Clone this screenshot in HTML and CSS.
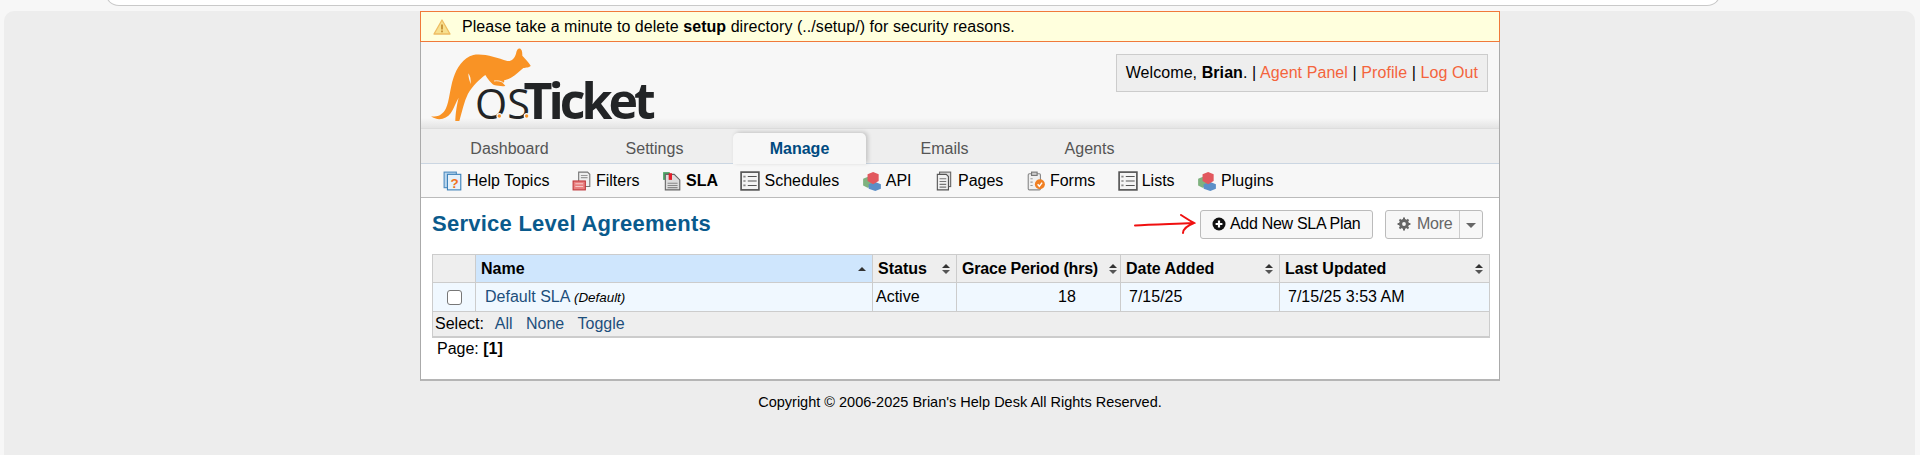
FILE: index.html
```html
<!DOCTYPE html>
<html lang="en">
<head>
    <meta charset="UTF-8">
    <title>osTicket :: SLA Plans</title>
    <link rel="stylesheet" href="styles.css">
</head>
<body>
    <div class="browser-top"><div class="url-bar"></div></div>
    <div class="viewport">
        <div class="container">
            <div class="notice">
                <svg class="notice-icon" width="18" height="16" viewBox="0 0 18 16">
                    <path d="M9 1 L17 15 H1 Z" fill="#f7e08f" stroke="#eebc63" stroke-width="1.3" stroke-linejoin="round"/>
                    <rect x="8.1" y="5.5" width="1.8" height="5" fill="#c58f35"/>
                    <rect x="8.1" y="11.5" width="1.8" height="1.8" fill="#c58f35"/>
                </svg>
                <span>Please take a minute to delete <b>setup</b> directory (../setup/) for security reasons.</span>
            </div>

            <div class="header">
                <svg class="logo" width="240" height="100" viewBox="0 0 720 300">
                    <g transform="translate(3 15)">
                        <path fill="#f99325" d="M3 213 C18 218 38 212 48 190 C58 168 60 130 70 100 C80 68 100 38 130 30 C160 24 200 38 232 48 C244 50 254 40 258 26 C260 14 266 8 272 12 C277 16 277 26 277 32 C286 42 296 52 302 62 C298 68 288 67 280 69 C268 78 258 90 243 98 C236 102 228 104 222 106 C224 110 222 113 218 114 L226 122 C220 126 205 122 192 120 C182 114 172 100 166 90 C150 102 128 122 114 146 C102 170 96 200 88 228 L76 228 C76 210 80 180 86 158 C78 170 72 190 62 205 C48 225 20 228 3 213 Z"/>
                        <path fill="#f7f7f7" d="M115 85 C121 93 123 103 122 117 C118 107 115 96 115 85 Z"/>
                        <path fill="none" stroke="#f7f7f7" stroke-width="2.5" d="M192 108 C202 106 212 108 220 113"/>
                    </g>
                    <text x="138" y="238"><tspan class="logo-os">OS</tspan><tspan class="logo-ticket" dx="-19">Ticket</tspan></text>
                    <circle class="logo-dot" cx="211" cy="228" r="7"/>
                    <circle class="logo-dot" cx="293" cy="228" r="7"/>
                </svg>
                <div class="user-info">Welcome, <b>Brian</b>. | <a href="#">Agent Panel</a> | <a href="#">Profile</a> | <a href="#">Log Out</a></div>
            </div>

            <ul class="nav">
                <li>Dashboard</li>
                <li>Settings</li>
                <li class="active">Manage</li>
                <li>Emails</li>
                <li>Agents</li>
            </ul>

            <ul class="subnav">
                <li>
                    <svg viewBox="0 0 18 18">
                        <rect x="1" y="1" width="11" height="14" fill="#bcd7ee" stroke="#4d8cc0"/>
                        <rect x="4" y="3" width="12" height="14" fill="#e6f1fa" stroke="#3d82ba"/>
                        <text x="6.8" y="15" class="help-mark">?</text>
                    </svg>
                    Help Topics
                </li>
                <li>
                    <svg viewBox="0 0 18 18">
                        <path d="M6 1 H14 L16 3 V14 H6 Z" fill="#eee" stroke="#777"/>
                        <path d="M8 4 H14 M8 6 H14" stroke="#999"/>
                        <rect x="1" y="9" width="11" height="8" fill="#e98080" stroke="#c0383c"/>
                        <path d="M3 11.5 H10 M3 14 H10" stroke="#f7c7c7"/>
                    </svg>
                    Filters
                </li>
                <li class="current">
                    <svg viewBox="0 0 18 18">
                        <rect x="1" y="1" width="6" height="7" fill="#4aa564"/>
                        <path d="M3 3 H11 L16 8 V17 H3 Z" fill="#ddd" stroke="#666"/>
                        <rect x="6" y="2" width="3" height="6" fill="#e3202c"/>
                        <path d="M5 11 H14 M5 13 H14 M5 15 H14" stroke="#888"/>
                    </svg>
                    SLA
                </li>
                <li>
                    <svg viewBox="0 0 18 18"><use href="#list-icon"/></svg>
                    Schedules
                </li>
                <li>
                    <svg viewBox="0 0 18 18"><use href="#cubes-icon"/></svg>
                    API
                </li>
                <li>
                    <svg viewBox="0 0 18 18">
                        <rect x="5" y="1" width="10" height="13" fill="#ddd" stroke="#666"/>
                        <path d="M3 3 H11 L13 5 V17 H3 Z" fill="#f1f1f1" stroke="#555"/>
                        <path d="M5 7 H11 M5 9.5 H11 M5 12 H11 M5 14.5 H11" stroke="#777"/>
                    </svg>
                    Pages
                </li>
                <li>
                    <svg viewBox="0 0 18 18">
                        <rect x="2" y="2.5" width="11" height="14.5" rx="1" fill="#f0f0f0" stroke="#888"/>
                        <rect x="5" y="1" width="5" height="3" fill="#ccc" stroke="#777"/>
                        <path d="M4 7 H6 M4 10 H6 M4 13 H6" stroke="#999"/>
                        <circle cx="12.5" cy="12" r="4.5" fill="#f07f22"/>
                        <path d="M10.5 12 L12 13.8 L14.5 10.5" stroke="#fff" stroke-width="1.3" fill="none"/>
                    </svg>
                    Forms
                </li>
                <li>
                    <svg viewBox="0 0 18 18"><use href="#list-icon"/></svg>
                    Lists
                </li>
                <li>
                    <svg viewBox="0 0 18 18"><use href="#cubes-icon"/></svg>
                    Plugins
                </li>
            </ul>

            <div class="content">
                <div class="title-row">
                    <h2>Service Level Agreements</h2>
                    <div class="actions">
                        <svg class="red-arrow" width="62" height="20" viewBox="0 0 62 20">
                            <path d="M1 11.5 C16 10.5 36 10 59 9 M47 1 C52 4 56 7 60 9 C55 11 49 14 49 19" fill="none" stroke="#f01010" stroke-width="2" stroke-linecap="round"/>
                        </svg>
                        <button class="btn add-btn">
                            <svg width="14" height="14" viewBox="0 0 14 14">
                                <circle cx="7" cy="7" r="6.5" fill="#111"/>
                                <path d="M7 3.6 V10.4 M3.6 7 H10.4" stroke="#fff" stroke-width="2.2"/>
                            </svg>
                            Add New SLA Plan
                        </button>
                        <div class="btn more-btn">
                            <span class="more-label">
                                <svg width="14" height="14" viewBox="0 0 14 14">
                                    <circle cx="7" cy="7" r="3.6" fill="none" stroke="#666" stroke-width="2.8"/>
                                    <path d="M7 .6 V13.4 M.6 7 H13.4 M2.5 2.5 L11.5 11.5 M11.5 2.5 L2.5 11.5" stroke="#666" stroke-width="2"/>
                                    <circle cx="7" cy="7" r="1.9" fill="#f7f7f7"/>
                                </svg>
                                More
                            </span>
                            <span class="more-caret"></span>
                        </div>
                    </div>
                </div>

                <table class="list">
                    <thead>
                        <tr>
                            <th class="col-check"></th>
                            <th class="col-name sorted"><span class="th-inner">Name<i class="sort-up"></i></span></th>
                            <th class="col-status"><span class="th-inner">Status<i class="sort-both"></i></span></th>
                            <th class="col-grace"><span class="th-inner">Grace Period (hrs)<i class="sort-both"></i></span></th>
                            <th class="col-date"><span class="th-inner">Date Added<i class="sort-both"></i></span></th>
                            <th class="col-updated"><span class="th-inner">Last Updated<i class="sort-both"></i></span></th>
                        </tr>
                    </thead>
                    <tbody>
                        <tr>
                            <td class="cell-check"><span class="checkbox"></span></td>
                            <td class="cell-name"><a href="#">Default SLA</a> <small>(Default)</small></td>
                            <td>Active</td>
                            <td class="cell-grace">18</td>
                            <td class="cell-pad">7/15/25</td>
                            <td class="cell-pad">7/15/25 3:53 AM</td>
                        </tr>
                    </tbody>
                    <tfoot>
                        <tr>
                            <td colspan="6">Select:&nbsp; <a class="select-all" href="#">All</a> &nbsp;&nbsp;<a href="#">None</a> &nbsp;&nbsp;<a href="#">Toggle</a></td>
                        </tr>
                    </tfoot>
                </table>
                <div class="pager">Page: <b>[1]</b></div>
            </div>
        </div>
        <div class="footer">Copyright © 2006-2025 Brian's Help Desk All Rights Reserved.</div>
    </div>

    <svg class="icon-defs" width="0" height="0">
        <defs>
            <g id="list-icon">
                <rect x="1" y="1" width="16" height="16" fill="#f4f4f4" stroke="#555" stroke-width="1.5"/>
                <path d="M7 5 H15 M7 9 H15 M7 13 H15" stroke="#555"/>
                <path d="M3 5 H5 M3 9 H5 M3 13 H5" stroke="#888" stroke-width="1.5"/>
            </g>
            <g id="cubes-icon">
                <path d="M1 7 L6 5 L10 8 V14 L5 15 L1 13 Z" fill="#7fb27f"/>
                <path d="M6 12 L12 10 L17 12 V16 L12 18 L6 16 Z" fill="#5b8fc7"/>
                <path d="M5 3 L10 1 L15 3 V9 L10 12 L5 9 Z" fill="#e2585e"/>
            </g>
        </defs>
    </svg>
</body>
</html>
```

FILE: styles.css
```css
html, body {
    margin: 0;
    padding: 0;
}

body {
    height: 455px;
    overflow: hidden;
    background-color: #f7f7f7;
    font-family: "Liberation Sans", Arial, sans-serif;
    font-size: 16px;
    color: #000;
}

a {
    text-decoration: none;
}

.browser-top {
    height: 10px;
    overflow: hidden;
}

.url-bar {
    height: 5px;
    margin: -20px 199px 0 105px;
    padding-top: 20px;
    background-color: #fff;
    border: 1px solid #c9c9c9;
    border-top: none;
    border-radius: 0 0 14px 14px;
}

.viewport {
    height: 445px;
    margin: 0 5px 0 4px;
    padding-left: 416px;
    background-color: #ededed;
    border-radius: 10px 10px 0 0;
}

.container {
    width: 1078px;
    background-color: #f7f7f7;
    border-left: 1px solid #aaa;
    border-right: 1px solid #aaa;
    border-bottom: 2px solid #b5b5b5;
}

.notice {
    display: flex;
    align-items: center;
    gap: 11px;
    height: 29px;
    margin: 1px -1px 0;
    padding-left: 12px;
    background-color: #ffd;
    border: 1px solid #f0793a;
    letter-spacing: 0.05px;
}

.header {
    display: flex;
    justify-content: space-between;
    height: 86px;
    background: linear-gradient(to bottom, #f7f7f7 76px, #e4e4e4 100%);
}

.logo {
    flex: none;
    margin: -2px 0 0 8px;
    font-family: "Open Sans", sans-serif;
    fill: #222426;
}

.logo-os {
    font-size: 124px;
    font-weight: 400;
}

.logo-ticket {
    font-size: 150px;
    font-weight: 700;
    letter-spacing: -12px;
}

.logo-dot {
    fill: #f99325;
    stroke: #f7f7f7;
    stroke-width: 4px;
}

.user-info {
    height: 36px;
    margin: 12px 11px 0 0;
    padding: 0 9px;
    line-height: 36px;
    background-color: #eee;
    border: 1px solid #ccc;
    white-space: nowrap;
    letter-spacing: 0.08px;
}

.user-info a {
    color: #f4643c;
}

.nav {
    display: flex;
    gap: 12px;
    height: 30px;
    margin: 0;
    padding: 4px 0 0 22px;
    list-style: none;
    background-color: #eee;
    border-top: 1px solid #ddd;
    border-bottom: 1px solid #cbd6e2;
    color: #555;
}

.nav li {
    width: 133px;
    height: 30px;
    line-height: 32px;
    text-align: center;
}

.nav li.active {
    height: 31px;
    background-color: #f7f7f7;
    box-shadow: 2px -1px 4px rgba(0, 0, 0, 0.18);
    border-radius: 5px 5px 0 0;
    font-weight: bold;
    color: #004a80;
}

.subnav {
    display: flex;
    align-items: center;
    height: 33px;
    margin: 0;
    padding: 0 0 0 22px;
    list-style: none;
    border-bottom: 1px solid #bbb;
}

.subnav li {
    display: flex;
    align-items: center;
    gap: 4px;
    margin-right: 22.5px;
}

.subnav svg {
    width: 20px;
    height: 20px;
}

.subnav li.current {
    font-weight: bold;
}

.help-mark {
    font-size: 12px;
    font-weight: bold;
    fill: #f07020;
}

.content {
    height: 181px;
    padding: 0 9px 0 11px;
    background-color: #fff;
}

.title-row {
    display: flex;
    align-items: center;
    justify-content: space-between;
    height: 52px;
    margin-bottom: 4px;
}

.title-row h2 {
    margin: 0;
    font-size: 22px;
    font-weight: bold;
    color: #0a5a8c;
    letter-spacing: 0.25px;
}

.actions {
    display: flex;
    align-items: center;
}

.red-arrow {
    margin-right: 4px;
}

.btn {
    display: flex;
    align-items: center;
    height: 29px;
    box-sizing: border-box;
    padding: 0;
    background-color: #f7f7f7;
    border: 1px solid #bbb;
    border-radius: 3px;
    font-family: inherit;
    font-size: 16px;
    letter-spacing: -0.3px;
    color: #000;
}

.add-btn {
    gap: 4px;
    width: 173px;
    padding-left: 11px;
}

.more-btn {
    width: 98px;
    margin: 0 7px 0 12px;
    color: #666;
}

.more-label {
    display: flex;
    align-items: center;
    gap: 6px;
    flex: 1;
    height: 100%;
    padding-left: 11px;
    border-right: 1px solid #ccc;
}

.more-caret {
    width: 0;
    height: 0;
    margin: 2px 6px 0 6px;
    border-left: 5px solid transparent;
    border-right: 5px solid transparent;
    border-top: 5px solid #666;
}

.list {
    width: 1058px;
    border-collapse: collapse;
    table-layout: fixed;
    border: 1px solid #ccc;
}

.list th {
    height: 27px;
    padding: 0;
    background-color: #eee;
    border: 1px solid #ccc;
    text-align: left;
    font-weight: bold;
}

.list th.sorted {
    background-color: #cfe6fd;
}

.col-check { width: 42px; }
.col-name { width: 396px; }
.col-status { width: 83px; }
.col-grace { width: 163px; }
.col-date { width: 158px; }

.th-inner {
    display: flex;
    align-items: center;
    justify-content: space-between;
    padding: 0 6px 0 5px;
}

.col-grace .th-inner {
    padding-right: 3px;
    letter-spacing: -0.2px;
}

.sort-up,
.sort-both {
    position: relative;
    flex: none;
    width: 8px;
    height: 10px;
}

.sort-up::before,
.sort-both::before {
    content: "";
    position: absolute;
    top: 0;
    left: 0;
    border-left: 4px solid transparent;
    border-right: 4px solid transparent;
    border-bottom: 4px solid #333;
}

.sort-up::before {
    top: 3px;
}

.sort-both::after {
    content: "";
    position: absolute;
    bottom: 0;
    left: 0;
    border-left: 4px solid transparent;
    border-right: 4px solid transparent;
    border-top: 4px solid #555;
}

.list tbody td {
    height: 28px;
    padding: 0 0 0 3px;
    background-color: #f0f8ff;
    border: 1px solid #ccc;
}

.list a {
    color: #1d4f7c;
}

.list tbody td.cell-check {
    padding: 0;
    text-align: center;
}

.checkbox {
    display: block;
    width: 13px;
    height: 13px;
    margin: 0 auto;
    background-color: #fff;
    border: 1px solid #777;
    border-radius: 3px;
}

.list tbody td.cell-name {
    padding-left: 9px;
}

.cell-name small {
    font-size: 13.4px;
    font-style: italic;
}

.list tbody td.cell-grace {
    padding: 0 0 0 101px;
}

.list tbody td.cell-pad {
    padding-left: 8px;
}

.list tfoot td {
    height: 24px;
    padding: 0 0 0 2px;
    background-color: #eee;
    border-bottom: 2px solid #ccc;
}

.select-all {
    margin-left: 2px;
}

.pager {
    margin-top: 1px;
    padding-left: 5px;
    line-height: 20px;
}

.footer {
    margin-top: 13px;
    width: 1080px;
    text-align: center;
    font-size: 14.5px;
}

.icon-defs {
    position: absolute;
}
```
